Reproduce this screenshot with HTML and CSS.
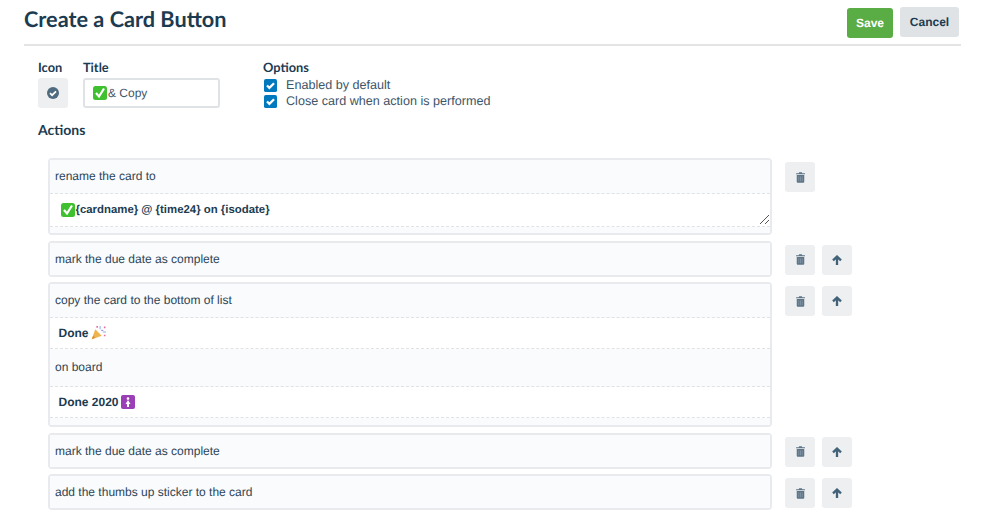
FILE: index.html
```html
<!DOCTYPE html>
<html lang="en">
<head>
<meta charset="utf-8">
<title>Create a Card Button</title>
<link rel="stylesheet" href="styles.css">
</head>
<body>
<svg class="defs" width="0" height="0" aria-hidden="true">
  <symbol id="trash" viewBox="0 0 12 14">
    <path fill="#5e7588" d="M4.200 0h3.600l.6 1.300H11.500a.5.5 0 0 1 .5.5v.9H0v-.9a.5.5 0 0 1 .5-.5h3.100zM1 3.600h10v9.200c0 .7-.5 1.200-1.200 1.200H2.200C1.500 14 1 13.500 1 12.800z"/>
    <path stroke="#8a9bab" stroke-width="1" d="M3.700 5.500v6.500M6 5.500v6.500M8.300 5.500v6.500"/>
  </symbol>
  <symbol id="up" viewBox="0 0 12 12">
    <path fill="none" stroke="#42627a" stroke-width="2.800" d="M1.200 6.500 6 1.900l4.800 4.600M6 2.200V12"/>
  </symbol>
  <symbol id="check" viewBox="0 0 14 14">
    <rect width="14" height="14" rx="2" fill="#0079bf"/>
    <path fill="none" stroke="#fff" stroke-width="2.400" d="m3.200 7 2.600 2.500 5-5"/>
  </symbol>
  <symbol id="green" viewBox="0 0 14 14">
    <rect width="14" height="14" rx="2.500" fill="#3fc02f"/>
    <path fill="none" stroke="#fff" stroke-width="2.200" d="m3 7 3 3.500 5-8"/>
  </symbol>
  <symbol id="party" viewBox="0 0 14 14">
    <path fill="#eeb44f" d="M0.500 13.500 4 4l6 6z"/>
    <path fill="#d98a3a" d="M2 10l2 2-3 1z"/>
    <path fill="#8ab6e8" d="M8 1h1v3H8zM11 6h3v1h-3z"/>
    <path fill="#e86ea0" d="M5 1h1.500v1.500H5zM12 1.500h1.500V3H12zM12 9h1.500v1.500H12z"/>
    <path fill="#a58ad8" d="M9.500 4.500h2v1h-2z"/>
  </symbol>
  <symbol id="purple" viewBox="0 0 14 14">
    <rect width="14" height="14" rx="2" fill="#9a3fb5"/>
    <circle cx="7" cy="3.600" r="1.300" fill="#fff"/>
    <path fill="#fff" d="M7 5 9.500 9h-1.500v3H6V9H4.500z"/>
  </symbol>
</svg>

<main class="page">
  <header class="head">
    <h1 class="title">Create a Card Button</h1>
    <div class="head-actions">
      <button class="btn btn-save">Save</button>
      <button class="btn btn-cancel">Cancel</button>
    </div>
  </header>

  <section class="form">
    <div class="field field-icon">
      <div class="label">Icon</div>
      <div class="icon-pick">
        <svg width="12" height="12" viewBox="0 0 12 12"><circle cx="6" cy="6" r="6" fill="#4f6b80"/><path fill="none" stroke="#fff" stroke-width="1.700" d="m3 6.200 2.100 2L9 4.300"/></svg>
      </div>
    </div>
    <div class="field field-title">
      <div class="label">Title</div>
      <div class="input"><svg class="emoji" width="14" height="14"><use href="#green"/></svg><span>&amp; Copy</span></div>
    </div>
    <div class="field field-options">
      <div class="label">Options</div>
      <div class="opt"><svg width="13" height="13"><use href="#check"/></svg><span>Enabled by default</span></div>
      <div class="opt"><svg width="13" height="13"><use href="#check"/></svg><span>Close card when action is performed</span></div>
    </div>
  </section>

  <h2 class="actions-title">Actions</h2>

  <section class="rows">
    <div class="row">
      <div class="card">
        <div class="part part-text tall">rename the card to</div>
        <div class="part part-input area"><svg class="emoji" width="14" height="14"><use href="#green"/></svg><b class="template">{cardname} @ {time24} on {isodate}</b>
          <svg class="grip" width="9" height="9" viewBox="0 0 9 9"><path stroke="#555" stroke-width="1" d="M0 9 9 0M5 9l4-4"/></svg>
        </div>
        <div class="tail"></div>
      </div>
      <div class="tools">
        <button class="tool"><svg width="9" height="11"><use href="#trash"/></svg></button>
      </div>
    </div>

    <div class="row">
      <div class="card"><div class="part part-text single">mark the due date as complete</div></div>
      <div class="tools">
        <button class="tool"><svg width="9" height="11"><use href="#trash"/></svg></button>
        <button class="tool"><svg width="10" height="10"><use href="#up"/></svg></button>
      </div>
    </div>

    <div class="row">
      <div class="card">
        <div class="part part-text tall">copy the card to the bottom of list</div>
        <div class="part part-input list"><b>Done</b><svg class="emoji-after" width="15" height="15"><use href="#party"/></svg></div>
        <div class="part part-text mid">on board</div>
        <div class="part part-input list"><b>Done 2020</b><svg class="emoji-after" width="14" height="14"><use href="#purple"/></svg></div>
        <div class="tail tail-long"></div>
      </div>
      <div class="tools">
        <button class="tool"><svg width="9" height="11"><use href="#trash"/></svg></button>
        <button class="tool"><svg width="10" height="10"><use href="#up"/></svg></button>
      </div>
    </div>

    <div class="row">
      <div class="card"><div class="part part-text single">mark the due date as complete</div></div>
      <div class="tools">
        <button class="tool"><svg width="9" height="11"><use href="#trash"/></svg></button>
        <button class="tool"><svg width="10" height="10"><use href="#up"/></svg></button>
      </div>
    </div>

    <div class="row">
      <div class="card"><div class="part part-text single">add the thumbs up sticker to the card</div></div>
      <div class="tools">
        <button class="tool"><svg width="9" height="11"><use href="#trash"/></svg></button>
        <button class="tool"><svg width="10" height="10"><use href="#up"/></svg></button>
      </div>
    </div>
  </section>
</main>
</body>
</html>
```

FILE: styles.css
```css
* { box-sizing: border-box; }
html, body { margin: 0; padding: 0; }
body {
  width: 999px;
  height: 528px;
  overflow: hidden;
  background: #fff;
  color: #172b4d;
  font-family: "Liberation Sans", Arial, sans-serif;
  font-size: 12px;
  text-rendering: geometricPrecision;
}
.defs { position: absolute; }
.page { padding: 0 38px 0 24px; }

.head {
  height: 46px;
  display: flex;
  justify-content: space-between;
  border-bottom: 2px solid #e2e4e6;
}
.title {
  margin: 6px 0 0;
  font: 700 21.700px/27px Lato, sans-serif;
  color: #1c3b50;
}
.head-actions { display: flex; align-items: flex-start; gap: 7px; padding: 7px 2px 0 0; }
.btn {
  border: 0;
  border-radius: 3px;
  font: 700 12px/1 "Liberation Sans", Arial, sans-serif;
  text-rendering: geometricPrecision;
  height: 30px;
  padding: 0;
}
.btn-save { width: 46px; margin-top: 1px; background: #5aac44; color: #fff; }
.btn-cancel { width: 59px; background: #dfe3e6; color: #1c3b50; }

.form { display: flex; padding: 13px 0 0 14px; }
.label { font: 700 12.800px/16px Lato, sans-serif; color: #1c3b50; margin-bottom: 3px; }
.field-icon { width: 45px; }
.field-title { width: 180px; }
.icon-pick {
  width: 30px;
  height: 30px;
  background: #edeff1;
  border-radius: 3px;
  display: flex;
  align-items: center;
  justify-content: center;
}
.input {
  width: 137px;
  height: 30px;
  border: 2px solid #dfe3e6;
  border-radius: 3px;
  padding: 0 8px;
  display: flex;
  align-items: center;
  color: #3d5568;
  font-size: 12px;
}
.emoji { margin-right: 1px; flex: none; }
.opt {
  display: flex;
  align-items: center;
  height: 16px;
  gap: 9px;
  padding-left: 1px;
  color: #3d5568;
  font-size: 12.600px;
  margin-top: -1px;
}
.opt + .opt { margin-top: 0; }
.opt span { white-space: nowrap; }

.actions-title {
  margin: 12px 0 0 14px;
  font: 700 14px/17px Lato, sans-serif;
  color: #1c3b50;
}

.rows { padding: 20px 0 0 24px; display: flex; flex-direction: column; gap: 5.500px; }
.row { display: flex; align-items: flex-start; gap: 13px; }
.card {
  width: 724px;
  border: 2px solid #e8eaee;
  border-radius: 4px;
  background: #fff;
}
.part { color: #2c4559; font-size: 12px; display: flex; align-items: center; }
.part-text { background: #fafbfc; padding-left: 5px; }
.single { height: 32px; }
.tall { height: 33.500px; border-bottom: 1px dashed #dfe3e6; }
.mid { height: 38px; border-bottom: 1px dashed #dfe3e6; }
.part-input { padding-left: 8.500px; color: #1c3b50; border-bottom: 1px dashed #dfe3e6; }
.part-input b { font-weight: 700; }
.part-input .template { font-size: 11.400px; }
.area { height: 33.500px; position: relative; padding-left: 10.500px; }
.list { height: 31px; }
.tail { height: 6px; background: #fafbfc; }
.tail-long { height: 7.500px; }
.emoji-after { margin-left: 2px; }
.grip { position: absolute; right: 1px; bottom: 2px; }

.tools { display: flex; gap: 7px; padding-top: 4px; }
.tool {
  width: 30px;
  height: 30px;
  border: 0;
  border-radius: 3px;
  padding: 0;
  background: #edeff1;
  display: flex;
  align-items: center;
  justify-content: center;
}
```
